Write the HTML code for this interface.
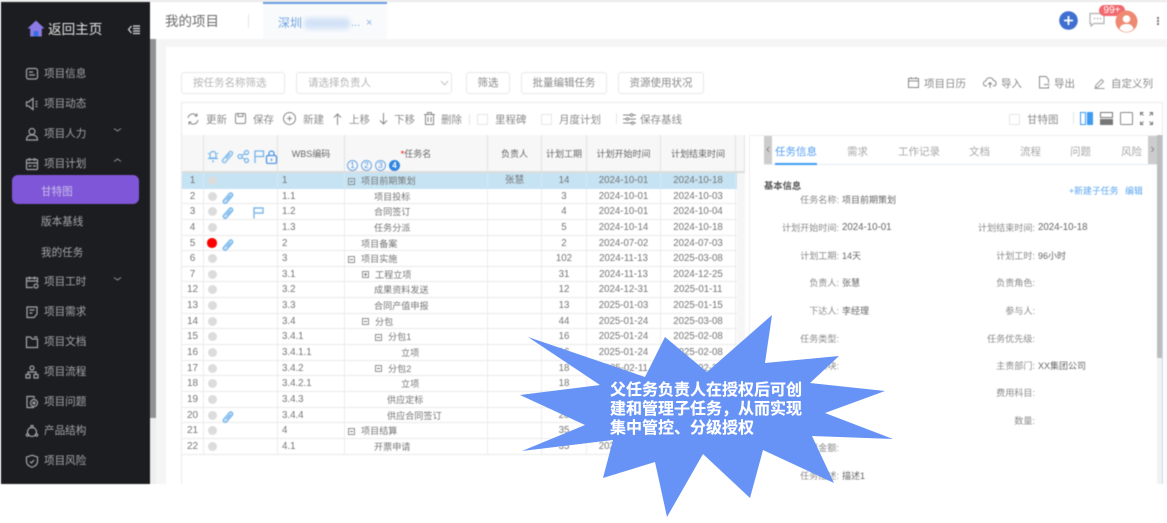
<!DOCTYPE html>
<html lang="zh"><head><meta charset="utf-8"><title>我的项目</title>
<style>
*{box-sizing:border-box}
html,body{margin:0;padding:0;background:#fff}
body{width:1167px;height:523px;overflow:hidden;position:relative;font-family:"Liberation Sans","Noto Sans CJK SC",sans-serif;font-size:10px;color:#666}
#app{position:absolute;left:0;top:0;width:1167px;height:484px;overflow:hidden;background:#fff;filter:blur(.4px)}
.a{position:absolute;white-space:nowrap}
.side{position:absolute;left:1px;top:2px;width:149px;height:482px;background:#1c1d20}
.m{position:absolute;left:44px;font-size:10.6px;color:#a3a5a8;white-space:nowrap;line-height:14px;margin-top:1px}
.sub{left:41px}
.ic{position:absolute;left:25px;width:14px;height:14px;fill:none;stroke:#a3a5a8;stroke-width:1.2;margin-top:1px}
.btn{position:absolute;top:72px;height:22px;border:1px solid #e8e8e8;border-radius:3px;text-align:center;line-height:20px;font-size:10.5px;color:#8a8a8a;background:#fff}
.tb{position:absolute;top:113px;font-size:10.5px;line-height:14px;color:#8c8c8c;white-space:nowrap}
.cb{position:absolute;top:114px;width:11px;height:11px;border:1px solid #e6e6e6;border-radius:1px;background:#fff}
.th{position:absolute;top:135px;height:38px;background:#f7f7f7;border-right:1px solid #e3e3e3;border-bottom:2px solid #dcdcdc;text-align:center;font-size:9px;color:#666;line-height:39px}
#rows{position:absolute;left:182px;top:173px;width:555px}
.r{display:flex;height:15.65px;line-height:16.4px;border-bottom:1px solid #eaeaea;font-size:9.7px;color:#757575}
.r.sel{background:#c6e3f3;border-bottom-color:#c6e3f3}
.r span{display:block;border-right:1px solid #ececec;height:100%;white-space:nowrap;position:relative;flex:none}
.r.sel span{border-right-color:#d6e8f2}
.n{width:22px;text-align:center;font-size:10px}
.i{width:74px}
.w{width:67px;padding-left:4px}
.t{width:143px;font-size:9.1px}
.o{width:54px;text-align:center}
.d{width:45px;text-align:center}
.s{width:74px;text-align:center}
.e{width:75px;text-align:center}
.t b{font-weight:400;position:absolute;top:0}
.t i{position:absolute;top:4.5px;width:7px;height:7px;border:1px solid #8f8f8f;background:transparent}
.t i:after{content:"";position:absolute;left:1px;top:2px;width:3px;height:1px;background:#777}
.t i.p:before{content:"";position:absolute;left:2px;top:1px;width:1px;height:3px;background:#777}
.dot{position:absolute;left:3.5px;top:3px;width:9px;height:9px;border-radius:50%;background:#dcdcdc}
.dot.red{background:#f00;left:3px;width:9.5px;height:9.5px;top:2.5px}
.clip{position:absolute;left:18px;top:3px;width:12px;height:12px}
.flag{position:absolute;left:49px;top:3px;width:11px;height:11.5px}
.tab{position:absolute;top:145px;font-size:10.5px;line-height:14px;color:#a9a9a9;white-space:nowrap}
.lb{position:absolute;font-size:9.1px;line-height:14px;color:#8a8a8a;white-space:nowrap;text-align:right}
.lb em{font-style:normal;color:#666;font-size:9.7px;position:absolute;left:100%;margin-left:3px}
.lb em.c{font-size:9px}
.L{right:328px}
.R{right:132px}
#star{position:absolute;left:0;top:0;width:1167px;height:523px}
.st{position:absolute;left:610px;font-size:16px;font-weight:700;line-height:19px;color:#fff;white-space:nowrap;text-shadow:0 0 .4px #fff}
</style></head><body>
<div id="app">
<div class="a" style="left:0;top:0;width:1167px;height:2px;background:#e9e9e9"></div>
<div class="a" style="left:150px;top:39px;width:1017px;height:445px;background:#f5f5f5"></div>
<div class="a" style="left:166px;top:47px;width:1000px;height:437px;background:#fff"></div>
<div class="a" style="left:150px;top:39px;width:6px;height:445px;background:#eee"></div>
<div class="a" style="left:150px;top:39px;width:6px;height:379px;background:#929292"></div>

<div class="side"></div>
<svg class="a" style="left:27px;top:20px;width:18px;height:17px" viewBox="0 0 18 17"><path d="M9 .5 .5 8.500h2.700V16.500h11.600V8.500h2.700z" fill="#8c7ae6"/><rect x="6.800" y="11" width="4.400" height="5.500" fill="#2f6fe0"/></svg>
<div class="a" style="left:48px;top:20px;font-size:13.600px;line-height:20px;color:#e2e2e2">返回主页</div>
<svg class="a" style="left:127px;top:24px;width:14px;height:11px" viewBox="0 0 14 11" fill="none" stroke="#ddd" stroke-width="1.2"><path d="M4.500 2 1.500 5.500l3 3.500M6 2h7M6 4.500h7M6 7h7M6 9.500h7"/></svg>

<svg class="ic" style="top:66px" viewBox="0 0 14 14"><rect x="1.500" y="1.500" width="11" height="10.500" rx="2"/><path d="M4 5h4M4 8h6"/></svg><div class="m" style="top:66px">项目信息</div>
<svg class="ic" style="top:96px" viewBox="0 0 14 14"><path d="M8 1.500 3.500 5H1.500v4h2L8 12.500zM10.500 4.500h2M10.500 7h2M10.500 9.500h2"/></svg><div class="m" style="top:96px">项目动态</div>
<svg class="ic" style="top:126px" viewBox="0 0 14 14"><circle cx="7" cy="4.500" r="3"/><path d="M1.500 13c0-3 2-5 5.500-5s5.500 2 5.500 5z"/></svg><div class="m" style="top:126px">项目人力</div>
<svg class="ic" style="top:156px" viewBox="0 0 14 14"><rect x="1.500" y="2.500" width="11" height="10" rx="1"/><path d="M1.500 6h11M4.500 1v3M9.500 1v3M3.500 9h3M8 9h3"/></svg><div class="m" style="top:156px">项目计划</div>
<svg class="a" style="left:113px;top:127px;width:9px;height:6px" viewBox="0 0 9 6" fill="none" stroke="#8d8f92"><path d="M1 1.500 4.500 4 8 1.500"/></svg>
<svg class="a" style="left:113px;top:157px;width:9px;height:6px" viewBox="0 0 9 6" fill="none" stroke="#8d8f92"><path d="M1 4.500 4.500 2 8 4.500"/></svg>
<div class="a" style="left:12px;top:175px;width:127px;height:29px;background:#8056d8;border-radius:6px"></div>
<div class="m sub" style="top:184px;color:#c9c0ea">甘特图</div>
<div class="m sub" style="top:214px">版本基线</div>
<div class="m sub" style="top:245px">我的任务</div>
<svg class="ic" style="top:274px" viewBox="0 0 14 14"><path d="M12.500 8V3H1.500v9.500H8M1.500 6h11M4.500 1.500v3M9.500 1.500v3"/><circle cx="11" cy="11" r="2"/></svg><div class="m" style="top:274px">项目工时</div>
<svg class="a" style="left:113px;top:276px;width:9px;height:6px" viewBox="0 0 9 6" fill="none" stroke="#8d8f92"><path d="M1 1.500 4.500 4 8 1.500"/></svg>
<svg class="ic" style="top:304px" viewBox="0 0 14 14"><path d="M2 2h10v7l-3 3.500H2zM4.500 5h5M4.500 8h3"/></svg><div class="m" style="top:304px">项目需求</div>
<svg class="ic" style="top:334px" viewBox="0 0 14 14"><path d="M1.500 2h4l1.500 2h5.500v8.500h-11zM9 2h3.500"/></svg><div class="m" style="top:334px">项目文档</div>
<svg class="ic" style="top:364px" viewBox="0 0 14 14"><circle cx="7" cy="3" r="2"/><rect x="1" y="9.500" width="4" height="3.500"/><rect x="9" y="9.500" width="4" height="3.500"/><path d="M3 9.500V7h8v2.500"/></svg><div class="m" style="top:364px">项目流程</div>
<svg class="ic" style="top:394px" viewBox="0 0 14 14"><path d="M9 12.500H2V1.500h7v2"/><circle cx="9" cy="8" r="3.500"/><circle cx="9" cy="8" r="1"/></svg><div class="m" style="top:394px">项目问题</div>
<svg class="ic" style="top:423px" viewBox="0 0 14 14"><circle cx="7" cy="8" r="4.500"/><circle cx="7" cy="2.500" r="1.200"/><circle cx="2.500" cy="11" r="1.200"/><circle cx="11.500" cy="11" r="1.200"/></svg><div class="m" style="top:423px">产品结构</div>
<svg class="ic" style="top:453px" viewBox="0 0 14 14"><path d="M7 1.200 12.500 3v4.500c0 3-2.500 4.800-5.500 5.800-3-1-5.500-2.800-5.500-5.800V3z"/><path d="M5 7.500 6.500 9 9 6"/></svg><div class="m" style="top:453px">项目风险</div>

<div class="a" style="left:150px;top:2px;width:1017px;height:37px;background:#fff"></div>
<div class="a" style="left:165px;top:12px;font-size:13.500px;line-height:19px;color:#6b6b6b">我的项目</div>
<div class="a" style="left:248px;top:14px;width:1px;height:14px;background:#e5e5e5"></div>
<div class="a" style="left:263px;top:2px;width:124px;height:37px;background:#f8fafc;border-top:2px solid #6a9fe0"></div>
<div class="a" style="left:278px;top:15px;font-size:12px;line-height:17px;color:#6fa3e0">深圳</div>
<div class="a" style="left:304px;top:18px;width:46px;height:11px;background:#d3e2f7;filter:blur(2.500px);border-radius:4px"></div>
<div class="a" style="left:351px;top:15px;font-size:11px;line-height:17px;color:#8cb4e6">...</div>
<div class="a" style="left:366px;top:16px;font-size:11px;line-height:15px;color:#8cb4e6">×</div>
<svg class="a" style="left:1059px;top:11px;width:19px;height:19px" viewBox="0 0 19 19"><circle cx="9.500" cy="9.500" r="9.300" fill="#3f6fd1"/><path d="M5 9.500h9M9.500 5v9" stroke="#fff" stroke-width="1.800"/></svg>
<svg class="a" style="left:1089px;top:12px;width:16px;height:15px" viewBox="0 0 16 15" fill="none" stroke="#b0b0b0" stroke-width="1.200"><path d="M1 1.500h14v10H5L2 14v-2.500H1z"/><path d="M5 6.500h1M8 6.500h1M11 6.500h1" stroke="#888"/></svg>
<div class="a" style="left:1099px;top:5px;width:26px;height:11px;background:#f0696e;border-radius:6px;text-align:center;color:#fff;font-size:10px;line-height:11px">99+</div>
<svg class="a" style="left:1115px;top:10px;width:23px;height:23px" viewBox="0 0 23 23"><circle cx="11.500" cy="11.500" r="11" fill="#ee8a72"/><circle cx="11.500" cy="9" r="3.800" fill="#fff"/><path d="M4.500 19c1-4 3.500-5 7-5s6 1 7 5c-2 1.800-4.500 3-7 3s-5-1.200-7-3z" fill="#fff"/></svg>
<div class="a" style="left:1157px;top:17px;width:2px;height:2px;background:#777;box-shadow:0 3px 0 #777,0 6px 0 #777"></div>

<div class="btn" style="left:181px;width:104px;color:#b5b5b5;text-align:left;padding-left:11px">按任务名称筛选</div>
<div class="btn" style="left:296px;width:156px;color:#b5b5b5;text-align:left;padding-left:11px">请选择负责人</div>
<svg class="a" style="left:440px;top:80px;width:9px;height:6px" viewBox="0 0 9 6" fill="none" stroke="#c4c4c4"><path d="M1 1 4.500 5 8 1"/></svg>
<div class="btn" style="left:466px;width:44px">筛选</div>
<div class="btn" style="left:521px;width:86px">批量编辑任务</div>
<div class="btn" style="left:618px;width:86px">资源使用状况</div>

<svg class="a" style="left:908px;top:77px;width:11px;height:11px" viewBox="0 0 11 11" fill="none" stroke="#8a8a8a"><rect x=".5" y="1.500" width="10" height="9"/><path d="M.5 4h10M3 0v2M8 0v2"/></svg>
<div class="a" style="left:924px;top:77px;font-size:10.500px;line-height:15px;color:#8a8a8a">项目日历</div>
<svg class="a" style="left:983px;top:77px;width:14px;height:12px" viewBox="0 0 14 12" fill="none" stroke="#8a8a8a"><path d="M4 9H3a2.500 2.500 0 0 1-.2-5A4 4 0 0 1 10.500 3.500 2.800 2.800 0 0 1 11 9h-1M7 11V6M5 7.500 7 5.500l2 2"/></svg>
<div class="a" style="left:1001px;top:77px;font-size:10.500px;line-height:15px;color:#8a8a8a">导入</div>
<svg class="a" style="left:1039px;top:76px;width:11px;height:13px" viewBox="0 0 11 13" fill="none" stroke="#8a8a8a"><path d="M9.500 7V3.500L7 .5H.5v11.500h9V10M5 8.500h5.500"/></svg>
<div class="a" style="left:1054px;top:77px;font-size:10.500px;line-height:15px;color:#8a8a8a">导出</div>
<svg class="a" style="left:1094px;top:78px;width:11px;height:11px" viewBox="0 0 11 11" fill="none" stroke="#9a9a9a"><path d="M1 10 2 7 7.500 1.500 9.500 3.500 4 9zM1 10.500h9.500"/></svg>
<div class="a" style="left:1111px;top:77px;font-size:10.500px;line-height:15px;color:#8a8a8a">自定义列</div>

<div class="a" style="left:181px;top:102px;width:982px;height:382px;border:1px solid #eaeaea;border-bottom:0"></div>

<svg class="a" style="left:187px;top:113px;width:12px;height:12px" viewBox="0 0 12 12" fill="none" stroke="#888"><path d="M1 5A5 5 0 0 1 10 3M11 7A5 5 0 0 1 2 9M10 .5V3H7.500M2 11.500V9h2.500"/></svg>
<div class="tb" style="left:206px">更新</div>
<svg class="a" style="left:235px;top:113px;width:12px;height:12px" viewBox="0 0 12 12" fill="none" stroke="#888"><rect x=".5" y=".5" width="10" height="10" rx="1.500"/><path d="M3 .5v3h5v-3"/></svg>
<div class="tb" style="left:253px">保存</div>
<svg class="a" style="left:283px;top:112px;width:13px;height:13px" viewBox="0 0 13 13" fill="none" stroke="#888"><circle cx="6.500" cy="6.500" r="6"/><path d="M4 6.500h5M6.500 4v5"/></svg>
<div class="tb" style="left:303px">新建</div>
<svg class="a" style="left:333px;top:113px;width:9px;height:12px" viewBox="0 0 9 12" fill="none" stroke="#888"><path d="M4.500 12V1M1 4.500 4.500 1 8 4.500"/></svg>
<div class="tb" style="left:349px">上移</div>
<svg class="a" style="left:379px;top:113px;width:9px;height:12px" viewBox="0 0 9 12" fill="none" stroke="#888"><path d="M4.500 0v11M1 7.500 4.500 11 8 7.500"/></svg>
<div class="tb" style="left:394px">下移</div>
<svg class="a" style="left:424px;top:112px;width:11px;height:13px" viewBox="0 0 11 13" fill="none" stroke="#888"><path d="M0 2.500h11M3.500 2.500V.5h4v2M1.500 2.500v10h8v-10M4 5v5M7 5v5"/></svg>
<div class="tb" style="left:441px">删除</div>
<div class="a" style="left:469px;top:114px;width:1px;height:11px;background:#e5e5e5"></div>
<div class="cb" style="left:477px"></div><div class="tb" style="left:495px">里程碑</div>
<div class="cb" style="left:541px"></div><div class="tb" style="left:559px">月度计划</div>
<div class="a" style="left:616px;top:113px;width:1px;height:11px;background:#e5e5e5"></div>
<svg class="a" style="left:623px;top:113px;width:13px;height:12px" viewBox="0 0 13 12" fill="none" stroke="#888"><path d="M0 2h7M10 2h3M0 6h3M6 6h7M0 10h8M11 10h2"/><circle cx="8.500" cy="2" r="1.300"/><circle cx="4.500" cy="6" r="1.300"/><circle cx="9.500" cy="10" r="1.300"/></svg>
<div class="tb" style="left:640px">保存基线</div>

<div class="cb" style="left:1009px"></div><div class="tb" style="left:1027px">甘特图</div>
<div class="a" style="left:1073px;top:112px;width:1px;height:12px;background:#e5e5e5"></div>
<svg class="a" style="left:1080px;top:112px;width:13px;height:13px" viewBox="0 0 13 13"><rect x=".5" y=".5" width="5" height="12" fill="#fff" stroke="#3d9bf0"/><rect x="7" y="0" width="6" height="13" fill="#3d9bf0"/></svg>
<svg class="a" style="left:1100px;top:112px;width:13px;height:13px" viewBox="0 0 13 13"><rect x=".5" y=".5" width="12" height="5" fill="#fff" stroke="#777"/><rect x="0" y="7" width="13" height="6" fill="#777"/></svg>
<svg class="a" style="left:1120px;top:112px;width:13px;height:13px" viewBox="0 0 13 13"><rect x=".5" y=".5" width="12" height="12" rx="1" fill="#fff" stroke="#888"/></svg>
<svg class="a" style="left:1140px;top:112px;width:13px;height:13px" viewBox="0 0 13 13" fill="none" stroke="#777"><path d="M.5 3.500v-3h3M.5.500l3 3M12.500 3.500v-3h-3M12.500.5l-3 3M.5 9.500v3h3M.5 12.500l3-3M12.500 9.500v3h-3M12.500 12.500l-3-3"/></svg>

<div class="th" style="left:182px;width:22px"></div>
<div class="th" style="left:204px;width:74px"></div>
<div class="th" style="left:278px;width:67px">WBS编码</div>
<div class="th" style="left:345px;width:143px"><span style="color:#f00">*</span>任务名</div>
<div class="th" style="left:488px;width:54px">负责人</div>
<div class="th" style="left:542px;width:45px">计划工期</div>
<div class="th" style="left:587px;width:74px">计划开始时间</div>
<div class="th" style="left:661px;width:75px">计划结束时间</div>
<div class="th" style="left:736px;width:9px"></div>
<svg class="a" style="left:207px;top:149px;width:71px;height:15px" viewBox="0 0 71 15" fill="none" stroke="#74b4ec" stroke-width="1.200"><path d="M6 2.500c-2 0-3 1.500-3 3.500v3H9V6c0-2-1-3.500-3-3.500zM1 9.500h10M6 11v2.500M1 4l1 1M11 4l-1 1"/><path d="M16 10.500 22.500 3c1.500-1.500 4 .5 2.500 2.500l-6.500 7.500c-1.500 1.500-4-.5-2.500-2.500zM19 9.500l4-5" stroke="#8fc2ee" stroke-width="1.600"/><circle cx="39.500" cy="3.500" r="2"/><circle cx="33" cy="7.500" r="2"/><circle cx="39.500" cy="11.500" r="2"/><path d="M35 6.500l3-2M35 8.500l3 2"/><path d="M48 14V2h8.500v5.500H48" stroke-width="1.300"/><rect x="59.500" y="6.500" width="10" height="8" rx="1.500" stroke="#4a94e4" stroke-width="1.300"/><path d="M62 6.500V4.500a2.500 2.500 0 0 1 5 0v2M64.500 9.500v2.500" stroke="#4a94e4"/></svg>
<div class="a" style="left:347px;top:160px;width:11px;height:11px;border:1px solid #6aa5e6;border-radius:50%;font-size:8px;line-height:9px;text-align:center;color:#4a94e4">1</div>
<div class="a" style="left:361px;top:160px;width:11px;height:11px;border:1px solid #6aa5e6;border-radius:50%;font-size:8px;line-height:9px;text-align:center;color:#4a94e4">2</div>
<div class="a" style="left:375px;top:160px;width:11px;height:11px;border:1px solid #6aa5e6;border-radius:50%;font-size:8px;line-height:9px;text-align:center;color:#4a94e4">3</div>
<div class="a" style="left:389px;top:160px;width:11px;height:11px;background:#2f86e0;border-radius:50%;font-size:8px;line-height:11px;text-align:center;color:#fff;font-weight:700">4</div>

<div id="rows">
<div class="r sel"><span class="n">1</span><span class="i"><u class="dot"></u></span><span class="w">1</span><span class="t"><i style="left:3px"></i><b style="left:16px">项目前期策划</b></span><span class="o">张慧</span><span class="d">14</span><span class="s">2024-10-01</span><span class="e">2024-10-18</span></div>
<div class="r"><span class="n">2</span><span class="i"><u class="dot"></u><svg class="clip" viewBox="0 0 12 12" fill="#cfe4f7" stroke="#80bbee" stroke-width="1.500"><path d="M1.500 8.500 7.500 1.500c1.500-1.500 4 .5 2.800 2.500L4.500 10.800c-1.500 1.500-4-.5-3-2.300zM4.500 8l4-4.500"/></svg></span><span class="w">1.1</span><span class="t"><b style="left:29px">项目投标</b></span><span class="o"></span><span class="d">3</span><span class="s">2024-10-01</span><span class="e">2024-10-03</span></div>
<div class="r"><span class="n">3</span><span class="i"><u class="dot"></u><svg class="clip" viewBox="0 0 12 12" fill="#cfe4f7" stroke="#80bbee" stroke-width="1.500"><path d="M1.500 8.500 7.500 1.500c1.500-1.500 4 .5 2.800 2.500L4.500 10.800c-1.500 1.500-4-.5-3-2.300zM4.500 8l4-4.500"/></svg><svg class="flag" viewBox="0 0 11 11.500" fill="none" stroke="#7db7e8" stroke-width="1.400"><path d="M1 11.500V1h9v5H1"/></svg></span><span class="w">1.2</span><span class="t"><b style="left:29px">合同签订</b></span><span class="o"></span><span class="d">4</span><span class="s">2024-10-01</span><span class="e">2024-10-04</span></div>
<div class="r"><span class="n">4</span><span class="i"><u class="dot"></u></span><span class="w">1.3</span><span class="t"><b style="left:29px">任务分派</b></span><span class="o"></span><span class="d">5</span><span class="s">2024-10-14</span><span class="e">2024-10-18</span></div>
<div class="r"><span class="n">5</span><span class="i"><u class="dot red"></u><svg class="clip" viewBox="0 0 12 12" fill="#cfe4f7" stroke="#80bbee" stroke-width="1.500"><path d="M1.500 8.500 7.500 1.500c1.500-1.500 4 .5 2.800 2.500L4.500 10.800c-1.500 1.500-4-.5-3-2.300zM4.500 8l4-4.500"/></svg></span><span class="w">2</span><span class="t"><b style="left:16px">项目备案</b></span><span class="o"></span><span class="d">2</span><span class="s">2024-07-02</span><span class="e">2024-07-03</span></div>
<div class="r"><span class="n">6</span><span class="i"><u class="dot"></u></span><span class="w">3</span><span class="t"><i style="left:3px"></i><b style="left:16px">项目实施</b></span><span class="o"></span><span class="d">102</span><span class="s">2024-11-13</span><span class="e">2025-03-08</span></div>
<div class="r"><span class="n">7</span><span class="i"><u class="dot"></u></span><span class="w">3.1</span><span class="t"><i class="p" style="left:17px"></i><b style="left:30px">工程立项</b></span><span class="o"></span><span class="d">31</span><span class="s">2024-11-13</span><span class="e">2024-12-25</span></div>
<div class="r"><span class="n">12</span><span class="i"><u class="dot"></u></span><span class="w">3.2</span><span class="t"><b style="left:29px">成果资料发送</b></span><span class="o"></span><span class="d">12</span><span class="s">2024-12-31</span><span class="e">2025-01-11</span></div>
<div class="r"><span class="n">13</span><span class="i"><u class="dot"></u></span><span class="w">3.3</span><span class="t"><b style="left:29px">合同产值申报</b></span><span class="o"></span><span class="d">13</span><span class="s">2025-01-03</span><span class="e">2025-01-15</span></div>
<div class="r"><span class="n">14</span><span class="i"><u class="dot"></u></span><span class="w">3.4</span><span class="t"><i style="left:17px"></i><b style="left:30px">分包</b></span><span class="o"></span><span class="d">44</span><span class="s">2025-01-24</span><span class="e">2025-03-08</span></div>
<div class="r"><span class="n">15</span><span class="i"><u class="dot"></u></span><span class="w">3.4.1</span><span class="t"><i style="left:30px"></i><b style="left:43px">分包1</b></span><span class="o"></span><span class="d">16</span><span class="s">2025-01-24</span><span class="e">2025-02-08</span></div>
<div class="r"><span class="n">16</span><span class="i"><u class="dot"></u></span><span class="w">3.4.1.1</span><span class="t"><b style="left:56px">立项</b></span><span class="o"></span><span class="d">16</span><span class="s">2025-01-24</span><span class="e">2025-02-08</span></div>
<div class="r"><span class="n">17</span><span class="i"><u class="dot"></u></span><span class="w">3.4.2</span><span class="t"><i style="left:30px"></i><b style="left:43px">分包2</b></span><span class="o"></span><span class="d">18</span><span class="s">2025-02-11</span><span class="e">2025-02-28</span></div>
<div class="r"><span class="n">18</span><span class="i"><u class="dot"></u></span><span class="w">3.4.2.1</span><span class="t"><b style="left:56px">立项</b></span><span class="o"></span><span class="d">18</span><span class="s">2025-02-11</span><span class="e">2025-02-28</span></div>
<div class="r"><span class="n">19</span><span class="i"><u class="dot"></u></span><span class="w">3.4.3</span><span class="t"><b style="left:42px">供应定标</b></span><span class="o"></span><span class="d">5</span><span class="s">2025-03-01</span><span class="e">2025-03-05</span></div>
<div class="r"><span class="n">20</span><span class="i"><u class="dot"></u><svg class="clip" viewBox="0 0 12 12" fill="#cfe4f7" stroke="#80bbee" stroke-width="1.500"><path d="M1.500 8.500 7.500 1.500c1.500-1.500 4 .5 2.800 2.500L4.500 10.800c-1.500 1.500-4-.5-3-2.300zM4.500 8l4-4.500"/></svg></span><span class="w">3.4.4</span><span class="t"><b style="left:42px">供应合同签订</b></span><span class="o"></span><span class="d">20</span><span class="s">2025-02-11</span><span class="e">2025-03-08</span></div>
<div class="r"><span class="n">21</span><span class="i"><u class="dot"></u></span><span class="w">4</span><span class="t"><i style="left:3px"></i><b style="left:16px">项目结算</b></span><span class="o"></span><span class="d">35</span><span class="s">2025-03-01</span><span class="e">2025-04-18</span></div>
<div class="r"><span class="n">22</span><span class="i"><u class="dot"></u></span><span class="w">4.1</span><span class="t"><b style="left:29px">开票申请</b></span><span class="o"></span><span class="d">35</span><span class="s">2025-03-01</span><span class="e">2025-04-18</span></div>
</div>

<div class="a" style="left:737px;top:173px;width:8px;height:311px;background:#f6f6f6"></div>
<div class="a" style="left:749px;top:135px;width:414px;height:349px;border:1px solid #eee;border-right:0;border-bottom:0;background:#fff"></div>
<div class="a" style="left:764px;top:164px;width:393px;height:1px;background:#e3ecf7"></div>
<div class="a" style="left:764px;top:136px;width:8px;height:28px;background:#ccc;color:#888;font-size:13px;line-height:26px;text-align:center">‹</div>
<div class="a" style="left:1148px;top:136px;width:9px;height:28px;background:#ccc;color:#888;font-size:13px;line-height:26px;text-align:center">›</div>
<div class="tab" style="left:775px;color:#4f9df0">任务信息</div>
<div class="a" style="left:775px;top:163px;width:42px;height:2px;background:#3d9bf0"></div>
<div class="tab" style="left:847px">需求</div>
<div class="tab" style="left:898px">工作记录</div>
<div class="tab" style="left:969px">文档</div>
<div class="tab" style="left:1020px">流程</div>
<div class="tab" style="left:1070px">问题</div>
<div class="tab" style="left:1121px">风险</div>
<div class="a" style="left:1157px;top:135px;width:5px;height:349px;background:#f2f2f2"></div>
<div class="a" style="left:1157px;top:135px;width:5px;height:223px;background:#bdbdbd"></div>
<div class="a" style="left:1162px;top:135px;width:1px;height:349px;background:#c5d9f0"></div>
<div class="a" style="left:764px;top:179px;font-size:9.300px;line-height:14px;font-weight:700;color:#555">基本信息</div>
<div class="a" style="left:1069px;top:184px;font-size:8.900px;line-height:14px;color:#5aa5f0">+新建子任务</div>
<div class="a" style="left:1125px;top:184px;font-size:8.900px;line-height:14px;color:#5aa5f0">编辑</div>

<div class="lb L" style="top:193px">任务名称: <em class="c">项目前期策划</em></div>
<div class="lb L" style="top:221px">计划开始时间: <em>2024-10-01</em></div>
<div class="lb L" style="top:249px">计划工期: <em class="c">14天</em></div>
<div class="lb L" style="top:276px">负责人: <em class="c">张慧</em></div>
<div class="lb L" style="top:304px">下达人: <em class="c">李经理</em></div>
<div class="lb L" style="top:332px">任务类型:</div>
<div class="lb L" style="top:359px">所属模块:</div>
<div class="lb L" style="top:441px">预算金额:</div>
<div class="lb L" style="top:469px">任务描述: <em class="c">描述1</em></div>
<div class="lb R" style="top:221px">计划结束时间: <em>2024-10-18</em></div>
<div class="lb R" style="top:249px">计划工时: <em class="c">96小时</em></div>
<div class="lb R" style="top:276px">负责角色:</div>
<div class="lb R" style="top:304px">参与人:</div>
<div class="lb R" style="top:332px">任务优先级:</div>
<div class="lb R" style="top:359px">主责部门: <em class="c">XX集团公司</em></div>
<div class="lb R" style="top:386px">费用科目:</div>
<div class="lb R" style="top:414px">数量:</div>
</div>

<svg id="star" viewBox="0 0 1167 523"><polygon fill="#6693f5" points="772,315 765,363 839,356 810,383 885,391 825,413 893,439 812,436 834,483 763,450 750,498 703,454 667,517 655,462 603,478 613,440 522,451 585,425 520,395 600,385 528,337 645,377 665,337 707,372"/></svg>
<div class="st" style="top:381px">父任务负责人在授权后可创</div>
<div class="st" style="top:400px">建和管理子任务，从而实现</div>
<div class="st" style="top:419px">集中管控、分级授权</div>
</body></html>
